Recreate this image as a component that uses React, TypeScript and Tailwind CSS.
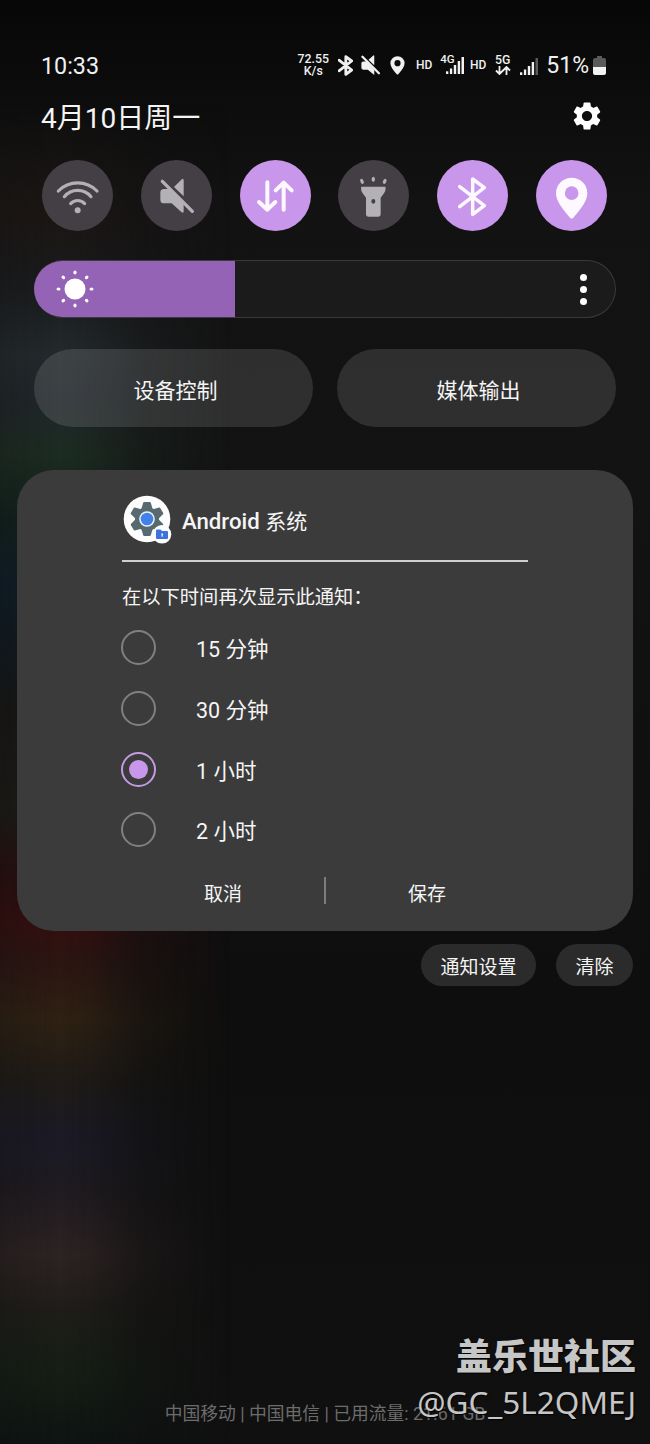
import React, { useState } from 'react';
import { MdSettings } from 'react-icons/md';
import clsx from 'clsx';

const OPTIONS = ['15 分钟', '30 分钟', '1 小时', '2 小时'];

/* ---------- Quick toggle glyphs, all on a 213 unit grid ---------- */

const WifiGlyph = () => (
  <g fill="none" stroke="currentColor" strokeWidth="9.5" strokeLinecap="round">
    <path d="M49 93A81 81 0 0 1 165 93" />
    <path d="M67 110A52 52 0 0 1 147 110" />
    <path d="M86 131A28 28 0 0 1 128 131" />
    <circle cx="107" cy="151" r="9" fill="currentColor" stroke="none" />
  </g>
);

const MuteGlyph = () => (
  <g fill="currentColor">
    <path d="M99 81L121 59Q128 53 128 62V109Z" />
    <path d="M69 87H84L128 132V153Q128 162 121 156L92 130H69Q58 130 58 119V98Q58 87 69 87Z" />
    <path d="M64 64L154 154" stroke="currentColor" strokeWidth="10" strokeLinecap="round" />
  </g>
);

const DataGlyph = () => (
  <g fill="none" stroke="currentColor" strokeWidth="12" strokeLinecap="round" strokeLinejoin="round">
    <path d="M82 67V149M57 126L82 149L106 126" />
    <path d="M131 149V68M107 91L131 68L155 91" />
  </g>
);

const TorchGlyph = () => (
  <g fill="currentColor">
    <path
      fillRule="evenodd"
      d="M72 80H140Q143 80 143 83Q143 94 138 100L128 113V162Q128 170 120 170H92Q84 170 84 162V113L74 100Q69 94 69 83Q69 80 72 80ZM106 117A6 7 0 0 0 106 131A6 7 0 0 0 106 117Z"
    />
    <ellipse cx="72" cy="64" rx="5" ry="8" transform="rotate(-24 72 64)" />
    <ellipse cx="106" cy="58" rx="5" ry="7.5" />
    <ellipse cx="140" cy="64" rx="5" ry="8" transform="rotate(24 140 64)" />
  </g>
);

const BluetoothGlyph = () => (
  <path
    d="M68 80L142 137L107 163V57L142 83L68 140"
    fill="none"
    stroke="currentColor"
    strokeWidth="10.5"
    strokeLinecap="round"
    strokeLinejoin="round"
  />
);

const PinGlyph = () => (
  <path
    fill="currentColor"
    fillRule="evenodd"
    d="M107 53A47 47 0 0 0 60 100C60 122 78 146 102 173Q107 178 112 173C136 146 154 122 154 100A47 47 0 0 0 107 53ZM107 79A20.5 20.5 0 0 1 107 120A20.5 20.5 0 0 1 107 79Z"
  />
);

const TOGGLES = [
  { id: 'wifi', on: false, glyph: <WifiGlyph /> },
  { id: 'sound', on: false, glyph: <MuteGlyph /> },
  { id: 'data', on: true, glyph: <DataGlyph /> },
  { id: 'torch', on: false, glyph: <TorchGlyph /> },
  { id: 'bluetooth', on: true, glyph: <BluetoothGlyph /> },
  { id: 'location', on: true, glyph: <PinGlyph /> }
];

function SignalBars({ dimLast = false }: { dimLast?: boolean }) {
  return (
    <svg viewBox="0 0 18 17" className="w-[18px] h-[17px]" fill="#f2f2f2">
      <rect x="0" y="14.3" width="2.3" height="2.7" />
      <rect x="3.9" y="11.5" width="2.3" height="5.5" />
      <rect x="7.8" y="8" width="2.4" height="9" />
      <rect x="11.7" y="4" width="2.4" height="13" />
      <rect x="15.5" y="0" width="2.5" height="17" opacity={dimLast ? 0.35 : 1} />
    </svg>
  );
}

function StatusBar() {
  return (
    <div className="h-[30px] pl-[41px] pr-[44px] flex items-center justify-between text-[#f0f0f0]">
      <span className="text-[23.3px] leading-none pt-[3px]">10:33</span>
      <div className="flex items-center">
        <div className="w-[34px] text-[12.3px] leading-[12px] font-medium text-center">
          <div>72.55</div>
          <div>K/s</div>
        </div>
        <svg viewBox="60 47 90 126" className="w-[15px] h-[21px] ml-2">
          <path d="M66 78L142 137L107 163V57L142 83L66 142" fill="none" stroke="currentColor" strokeWidth="17" strokeLinecap="round" strokeLinejoin="round" />
        </svg>
        <svg viewBox="54 50 106 112" className="w-[19px] h-[20px] ml-2">
          <path d="M96 77L121 54Q128 49 128 57V107Z" fill="currentColor" />
          <path d="M66 86H84L128 132V162L92 132H66Q56 132 56 122V96Q56 86 66 86Z" fill="currentColor" />
          <path d="M62 60L154 152" stroke="currentColor" strokeWidth="13" strokeLinecap="round" />
        </svg>
        <svg viewBox="58 52 98 126" className="w-[15px] h-[19px] ml-[10px]">
          <PinGlyph />
        </svg>
        <span className="w-[18px] ml-[10px] text-[12px] leading-none font-medium text-center">HD</span>
        <div className="relative w-[24px] h-[20px] ml-[7px]">
          <span className="absolute left-0 -top-px text-[11.5px] leading-none font-medium">4G</span>
          <div className="absolute right-0 bottom-px"><SignalBars /></div>
        </div>
        <span className="w-[18px] ml-[5px] text-[12px] leading-none font-medium text-center">HD</span>
        <div className="w-[17px] h-[22px] ml-[7px] -mt-px flex flex-col items-center">
          <span className="text-[12.3px] leading-[12px] font-medium">5G</span>
          <svg viewBox="0 0 16 9" className="w-4 h-[9px] shrink-0" fill="none" stroke="currentColor" strokeWidth="1.8">
            <path d="M4.5 0V8M1 4.5L4.5 8L8 4.5M11.5 9V1M8 4.5L11.5 1L15 4.5" />
          </svg>
        </div>
        <div className="ml-[9px] mt-[2px]"><SignalBars dimLast /></div>
        <span className="ml-[8px] text-[23px] leading-none">51%</span>
        <svg viewBox="0 0 13 19" className="w-[13px] h-[19px] ml-1">
          <path d="M4 0H9V2H11Q13 2 13 4V11H0V4Q0 2 2 2H4Z" fill="#5a5a5a" />
          <path d="M0 11H13V17Q13 19 11 19H2Q0 19 0 17Z" fill="#f2f2f2" />
        </svg>
      </div>
    </div>
  );
}

function BrightnessSlider() {
  return (
    <div className="mx-[34px] mt-[29px] h-[58px] rounded-full bg-[#3a3a3a] p-px">
      <div className="h-full rounded-full bg-[#1b1b1b] overflow-hidden flex items-center -ml-px">
        <div className="w-[201px] h-full bg-[#9463b5] flex items-center pl-[21px] shrink-0">
          <svg viewBox="-20 -20 40 40" className="w-10 h-10" fill="#fff">
            <circle r="10.5" />
            {[0, 45, 90, 135, 180, 225, 270, 315].map(angle => (
              <ellipse key={angle} cy="-16.5" rx="1.6" ry="2" transform={`rotate(${angle})`} />
            ))}
          </svg>
        </div>
        <div className="flex-1 flex flex-col items-end gap-[5px] pr-[28px]">
          <i className="size-[7px] rounded-full bg-white" />
          <i className="size-[7px] rounded-full bg-white" />
          <i className="size-[7px] rounded-full bg-white" />
        </div>
      </div>
    </div>
  );
}

function AppIcon() {
  return (
    <svg viewBox="0 0 50 50" className="w-[50px] h-[50px] ml-px">
      <circle cx="24" cy="24" r="23.3" fill="#fdfdfd" />
      <g transform="translate(24 24)">
        <g fill="#566a70">
          <circle r="12" />
          {[0, 60, 120, 180, 240, 300].map(angle => (
            <path key={angle} d="M-5.6 -10L-3.8 -16.2Q-3.5 -17 -2.7 -17H2.7Q3.5 -17 3.8 -16.2L5.6 -10Z" transform={`rotate(${angle})`} />
          ))}
        </g>
        <circle r="7.8" fill="#eef4fb" />
        <circle r="6.3" fill="#4081ea" />
      </g>
      <circle cx="39" cy="39.3" r="9.3" fill="#fdfdfd" />
      <path d="M33 35.5Q33 34.5 34 34.5H37.5L39 36H44Q45 36 45 37V43Q45 44 44 44H34Q33 44 33 43Z" fill="#3d74dc" />
      <path d="M38.3 38.5H40L39.6 41.8H38.7Z" fill="#fff" />
    </svg>
  );
}

function SnoozeCard() {
  const [selected, setSelected] = useState(2);

  return (
    <section className="mx-[17px] mt-[43px] h-[461px] rounded-[37px] bg-[#3b3b3b] px-[105px] pt-[25px] text-[#f5f5f5]">
      <header className="h-[67px] border-b-2 border-[#cfcfcf] flex items-start">
        <AppIcon />
        <h2 className="ml-[9px] mt-[14px] text-[22.2px] leading-6 font-medium whitespace-nowrap">
          Android <span className="text-[21px] font-normal">系统</span>
        </h2>
      </header>
      <p className="mt-[22px] text-[19.3px] leading-7 whitespace-nowrap">在以下时间再次显示此通知：</p>

      <div className="mt-[18px]">
        {OPTIONS.map((label, i) => (
          <button key={label} onClick={() => setSelected(i)} className="h-[60.8px] flex items-start -ml-px">
            <span
              className={clsx(
                'size-[35px] rounded-full border-2 flex items-center justify-center',
                i === selected ? 'border-[#c29be0]' : 'border-[#808080]'
              )}
            >
              {i === selected && <span className="size-[19px] rounded-full bg-[#c896ea]" />}
            </span>
            <span className="ml-[40px] mt-[6px] text-[21.5px] leading-7">{label}</span>
          </button>
        ))}
      </div>

      <footer className="flex items-center justify-between h-[30px] mt-[2px] text-[19px]">
        <button className="w-[203px] pt-[11px]">取消</button>
        <i className="w-[2px] h-[27px] bg-[#7c7c7c]" />
        <button className="w-[203px] pt-[11px]">保存</button>
      </footer>
    </section>
  );
}

export default function App() {
  return (
    <main className="relative w-[650px] h-[1444px] overflow-hidden flex flex-col bg-[linear-gradient(#070707,#121212_200px,#131313_450px,#0e0e0e_1000px,#101010)] font-['Roboto','Noto_Sans_CJK_SC',sans-serif] text-[#f5f5f5]">
      {/* Blurred wallpaper glow behind the left edge of the shade */}
      <div className="absolute left-0 inset-y-0 w-[230px] bg-[linear-gradient(transparent_100px,#1b1614_220px,#1a1c1e_290px,#242a2d_355px,#20262a_400px,#1c2c22_455px,#10201c_520px,#0f1d28_580px,#10191f_650px,#171614_710px,#1c1b18_810px,#280f0f_870px,#340f0f_920px,#2c1612_965px,#2f2113_1020px,#1f1b17_1080px,#1b1a26_1138px,#1f1b20_1190px,#2d2323_1255px,#1f1d19_1310px,#151e15_1375px,#0d1412_1444px)] [mask-image:linear-gradient(to_right,rgba(0,0,0,0.75),black_60px,rgba(0,0,0,0.85)_90px,rgba(0,0,0,0.35)_145px,transparent)]" />

      <div className="relative flex flex-col flex-1 pt-[50px]">
        <StatusBar />
        <div className="h-[42px] mt-[15px] pl-[41px] pr-[46px] flex items-center justify-between">
          <h1 className="text-[28px] leading-none translate-y-[3px]">4月10日周一</h1>
          <MdSettings className="size-[34px] text-white" />
        </div>

        <div className="mt-[23px] pl-[42px] pr-[43px] flex justify-between">
          {TOGGLES.map(t => (
            <button
              key={t.id}
              className={clsx('size-[71px] rounded-full', t.on ? 'bg-[#c896ea] text-[#fdf9ff]' : 'bg-[#443f45] text-[#b3b1b5]')}
            >
              <svg viewBox="0 0 213 213" className="size-full">{t.glyph}</svg>
            </button>
          ))}
        </div>

        <BrightnessSlider />

        <div className="mx-[34px] mt-[31px] flex gap-6 text-[21px]">
          <button className="flex-1 h-[78px] rounded-full bg-white/12 pt-[7px] pl-1">设备控制</button>
          <button className="flex-1 h-[78px] rounded-full bg-white/12 pt-[7px] pl-1">媒体输出</button>
        </div>

        <SnoozeCard />

        <div className="mt-[13px] mr-[17px] flex justify-end gap-5 text-[19px]">
          <button className="w-[115px] h-[42px] rounded-full bg-[#2b2b2b] pt-[7px]">通知设置</button>
          <button className="w-[77px] h-[42px] rounded-full bg-[#2b2b2b] pt-[7px]">清除</button>
        </div>

        <p className="mt-auto mb-[18px] text-center text-[17.8px] leading-6 text-[#6c6c6c]">
          中国移动 | 中国电信 | 已用流量: 21.61 GB
        </p>
      </div>

      {/* Community watermark */}
      <div className="absolute right-[14px] bottom-[20px] text-right text-[#c6c6c6] [text-shadow:1px_1px_1px_#000]">
        <div className="text-[36px] leading-[44px] font-black">盖乐世社区</div>
        <div className="font-['Noto_Sans',sans-serif] text-[31.5px] leading-[44px]">@GC_5L2QMEJ</div>
      </div>
    </main>
  );
}
